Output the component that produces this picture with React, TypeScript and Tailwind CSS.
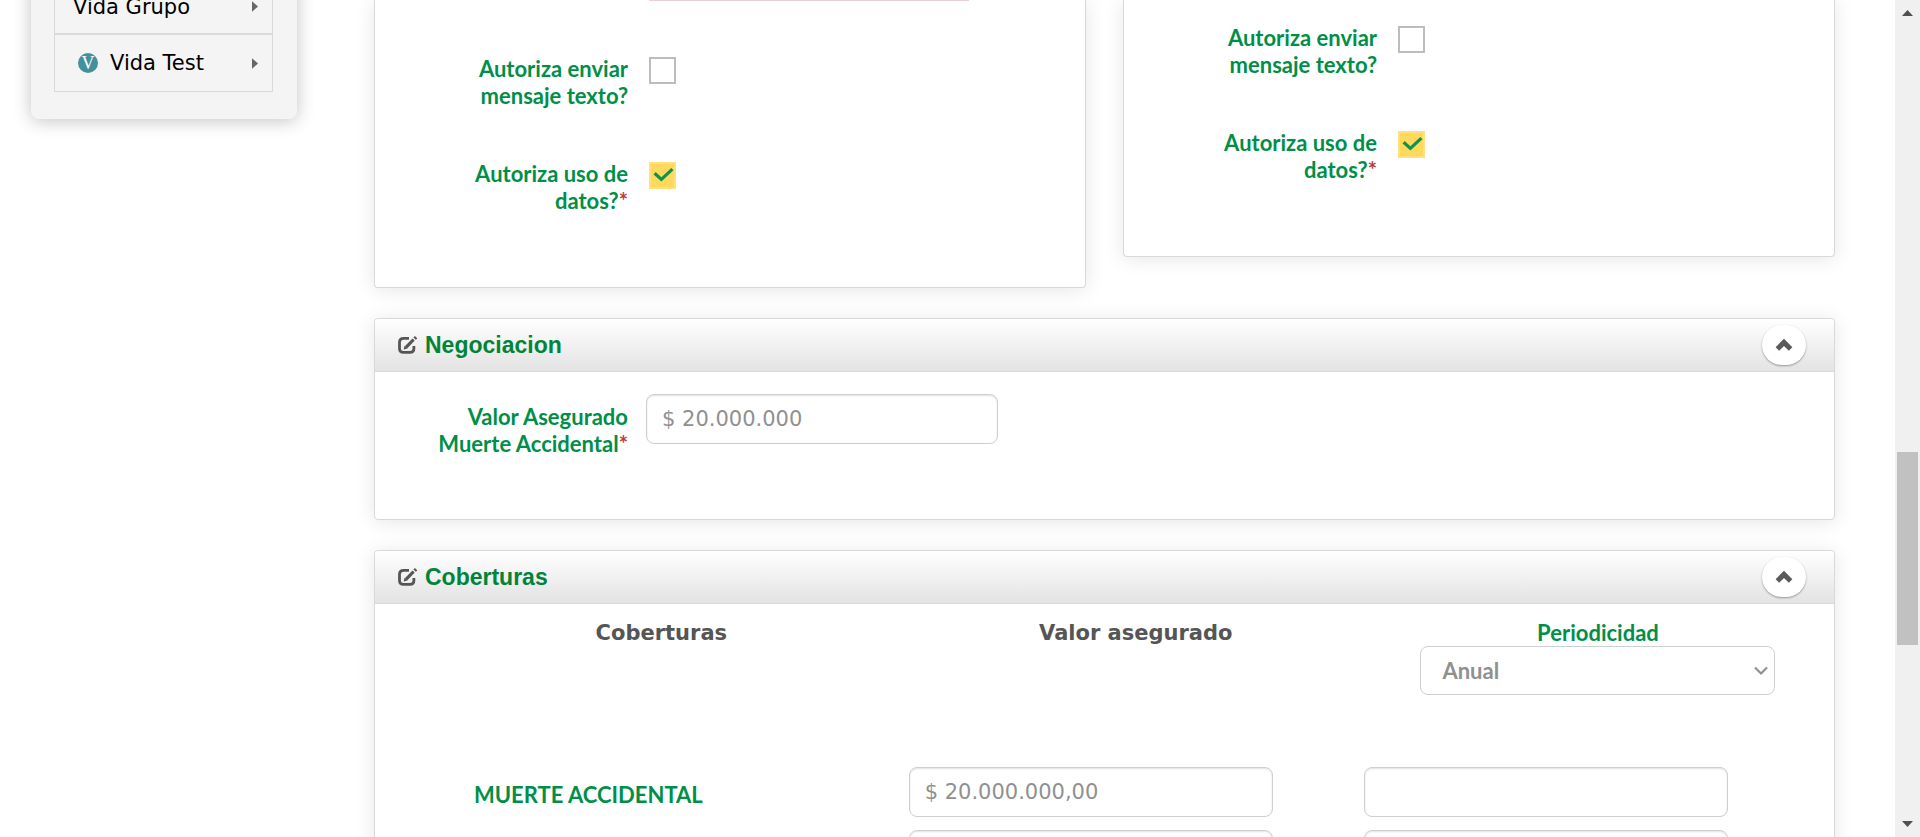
import { useState } from "react";
import type { ReactNode } from "react";

const label = "font-['Lato',sans-serif] text-[22px] leading-[27px] font-bold text-[#008f48]";
const field =
  "h-[50px] rounded-lg border border-[#cfcfcf] bg-white px-[15px] font-['DejaVu_Sans',sans-serif] text-[21px] text-[#909090] shadow-[inset_0_1px_2px_rgba(0,0,0,0.12)] outline-none";
const cardBase = "border-[#d9d9d9] bg-white shadow-[0_2px_20px_rgba(0,0,0,0.1)]";

function EditIcon() {
  return (
    <svg viewBox="0 0 20 20" className="size-5 shrink-0" fill="none" stroke="#555" aria-hidden="true">
      <path d="M12 3.3H6.6Q2.5 3.3 2.5 7.2v6.2q0 3.9 4.1 3.9h6.2q4.1 0 4.1-3.9V11" strokeWidth="2.8" />
      <path d="m9 12.4 7.6-7.9" strokeWidth="3.2" />
      <path d="m17.6 3.6 1.4-1.5" strokeWidth="3.2" />
      <path d="m6.6 14.6 1-3.8 2.8 2.7z" fill="#555" stroke="none" />
    </svg>
  );
}

function CollapseButton({ open, name, onClick }: { open: boolean; name: string; onClick: () => void }) {
  return (
    <button
      type="button"
      aria-expanded={open}
      aria-label={name}
      onClick={onClick}
      className="flex h-10 w-[44px] items-center justify-center rounded-[20px] bg-white shadow-[0_1px_2px_rgba(0,0,0,0.35)]"
    >
      <svg viewBox="0 0 18 14" className={open ? "h-[14px] w-[18px]" : "h-[14px] w-[18px] rotate-180"} aria-hidden="true">
        <path d="M2.4 11 9 4.4l6.6 6.6" fill="none" stroke="#5a5a5a" strokeWidth="5" />
      </svg>
    </button>
  );
}

function Panel({ title, children }: { title: string; children: ReactNode }) {
  const [open, setOpen] = useState(true);
  return (
    <section className={`rounded border ${cardBase}`}>
      <header className="flex h-[53px] items-center gap-2 rounded-t border-b border-[#d9d9d9] bg-linear-to-b from-white to-[#e3e3e3] pr-7 pl-[22px]">
        <EditIcon />
        <h2 className="flex-1 font-['Liberation_Sans',sans-serif] text-[23px] leading-7 font-bold text-[#00843a]">{title}</h2>
        <CollapseButton open={open} name={title} onClick={() => setOpen(!open)} />
      </header>
      {open && children}
    </section>
  );
}

function CheckRow({ id, text, required, initial }: { id: string; text: string; required?: boolean; initial?: boolean }) {
  return (
    <div className="flex gap-[21px]">
      <label htmlFor={id} className={`w-[201px] text-right ${label}`}>
        {text}
        {required && <span className="text-[#c0393b]">*</span>}
      </label>
      <span className="mt-[2px] grid size-[27px]">
        <input
          id={id}
          type="checkbox"
          defaultChecked={initial}
          className="peer col-start-1 row-start-1 size-[27px] appearance-none border-2 border-[#bdbdbd] bg-white checked:border-[#ffe07a] checked:bg-[#ffd95c]"
        />
        <svg viewBox="0 0 27 27" className="pointer-events-none invisible col-start-1 row-start-1 size-[27px] peer-checked:visible" aria-hidden="true">
          <path d="m5.6 11.2 6.8 6.2L23.4 7.2" fill="none" stroke="#12914a" strokeWidth="3.2" />
        </svg>
      </span>
    </div>
  );
}

function MenuArrow() {
  return (
    <svg viewBox="0 0 7 12" className="h-[11px] w-[6px]" aria-hidden="true">
      <path d="M0 0v12l7-6z" fill="#666" />
    </svg>
  );
}

function Sidebar() {
  const row = "flex h-[58px] items-center border border-[#dadada] pr-[14px] font-['DejaVu_Sans',sans-serif] text-[21px] leading-7 text-black";
  return (
    <nav className="-mt-6 w-[266px] shrink-0 self-start rounded-lg bg-[#f4f4f4] pr-6 pb-[27px] pl-[23px] shadow-[0_2px_18px_rgba(0,0,0,0.24)]">
      <a href="#vida-grupo" className={`${row} pt-[3px] pl-[18px]`}>
        <span className="flex-1">Vida Grupo</span>
        <MenuArrow />
      </a>
      <a href="#vida-test" className={`${row} gap-3 pl-[23px]`}>
        <span className="flex size-5 items-center justify-center rounded-full bg-[#42919b] font-['Liberation_Serif',serif] text-[18px] leading-5 text-white">V</span>
        <span className="flex-1">Vida Test</span>
        <MenuArrow />
      </a>
    </nav>
  );
}

function CoverageRow({ name, value }: { name: string; value: string }) {
  return (
    <tr>
      <th scope="row" className={`pt-1 pb-[13px] pl-[99px] text-left ${label}`}>{name}</th>
      <td className="pb-[13px] pl-[23px]">
        <input aria-label={`Valor asegurado ${name}`} defaultValue={value} className={`${field} block w-[364px]`} />
      </td>
      <td className="pb-[13px] pl-[26px]">
        <input aria-label={`Prima ${name}`} className={`${field} block w-[364px]`} />
      </td>
    </tr>
  );
}

function Scrollbar() {
  return (
    <div className="flex w-[25px] shrink-0 flex-col items-center bg-[#f0f0f0] py-[10px]" aria-hidden="true">
      <svg viewBox="0 0 11 6" className="h-[6px] w-[11px]"><path d="M0 6 5.5 0 11 6z" fill="#505050" /></svg>
      <div className="flex w-full flex-1 flex-col items-center">
        <div className="grow-[436]" />
        <div className="w-[21px] grow-[193] bg-[#c1c1c1]" />
        <div className="grow-[176]" />
      </div>
      <svg viewBox="0 0 11 6" className="h-[6px] w-[11px]"><path d="m0 0 5.5 6L11 0z" fill="#505050" /></svg>
    </div>
  );
}

export default function App() {
  const columnHead = "pt-4 text-center align-top font-['DejaVu_Sans',sans-serif] text-[21px] leading-[27px] font-bold text-[#555]";
  return (
    <div className="flex h-screen overflow-hidden bg-white">
      <div className="flex flex-1 gap-[77px] pr-[60px] pl-[31px]">
        <Sidebar />
        <main className="flex min-w-0 flex-1 flex-col gap-[30px]">
          <div className="grid grid-cols-2 items-start gap-[37px]">
            <section className={`rounded-b border-x border-b pb-[73px] pl-[52px] ${cardBase}`}>
              <div className="ml-[222px] h-px w-[320px] bg-[#e9cfdc]" />
              <div className="flex flex-col gap-[51px] pt-[54px]">
                <CheckRow id="tomador-mensaje" text="Autoriza enviar mensaje texto?" />
                <CheckRow id="tomador-datos" text="Autoriza uso de datos?" required initial />
              </div>
            </section>
            <section className={`flex flex-col gap-[51px] rounded-b border-x border-b pt-6 pb-[73px] pl-[52px] ${cardBase}`}>
              <CheckRow id="asegurado-mensaje" text="Autoriza enviar mensaje texto?" />
              <CheckRow id="asegurado-datos" text="Autoriza uso de datos?" required initial />
            </section>
          </div>

          <Panel title="Negociacion">
            <div className="flex gap-[18px] pt-[22px] pb-[62px] pl-[52px]">
              <label htmlFor="valor" className={`w-[201px] pt-[9px] text-right ${label}`}>
                Valor Asegurado Muerte Accidental<span className="text-[#c0393b]">*</span>
              </label>
              <input id="valor" defaultValue="$ 20.000.000" className={`${field} w-[352px]`} />
            </div>
          </Panel>

          <Panel title="Coberturas">
            <table className="w-full table-fixed">
              <thead>
                <tr className="h-[163px]">
                  <th scope="col" className={`w-[35%] pl-[62px] ${columnHead}`}>Coberturas</th>
                  <th scope="col" className={`w-[31%] pl-[48px] ${columnHead}`}>Valor asegurado</th>
                  <th scope="col" className="pt-[15px] pl-6 align-top">
                    <label htmlFor="periodicidad" className={`block ${label}`}>Periodicidad</label>
                    <span className="mx-auto grid w-[355px] items-center">
                      <select
                        id="periodicidad"
                        className="col-start-1 row-start-1 h-[49px] w-full appearance-none rounded-lg border border-[#cfcfcf] bg-white px-[21px] font-['Lato',sans-serif] text-[22px] font-bold text-[#909090]"
                      >
                        <option>Anual</option>
                      </select>
                      <svg viewBox="0 0 14 10" className="pointer-events-none col-start-1 row-start-1 mr-[7px] h-[10px] w-[14px] justify-self-end" aria-hidden="true">
                        <path d="m1 1.5 6 6 6-6" fill="none" stroke="#909090" strokeWidth="2.2" />
                      </svg>
                    </span>
                  </th>
                </tr>
              </thead>
              <tbody>
                <CoverageRow name="MUERTE ACCIDENTAL" value="$ 20.000.000,00" />
                <CoverageRow name="" value="" />
              </tbody>
            </table>
          </Panel>
        </main>
      </div>
      <Scrollbar />
    </div>
  );
}
